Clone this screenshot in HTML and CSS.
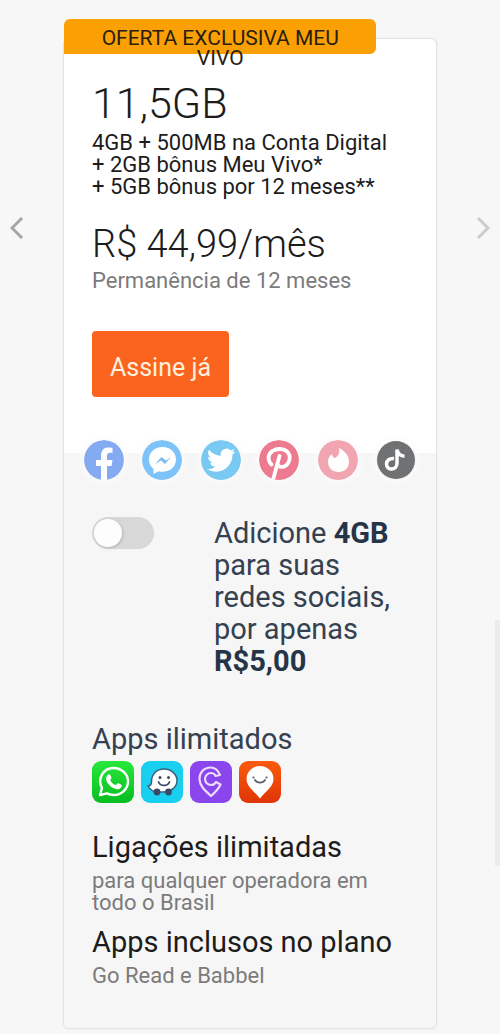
FILE: index.html
```html
<!DOCTYPE html>
<html lang="pt-BR">
<head>
<meta charset="utf-8">
<meta name="viewport" content="width=device-width, initial-scale=1">
<title>Oferta exclusiva Meu Vivo</title>
<link rel="stylesheet" href="styles.css">
</head>
<body>
<main class="carousel">
  <button class="arrow arrow-prev" type="button" aria-label="Anterior">
    <svg width="14" height="24" viewBox="0 0 14 24"><path d="M12 2 2 12l10 10"/></svg>
  </button>
  <article class="card">
    <p class="ribbon">OFERTA EXCLUSIVA MEU VIVO</p>
    <section class="offer">
      <h1 class="quota">11,5GB</h1>
      <p class="detail">4GB + 500MB na Conta Digital<br>+ 2GB bônus Meu Vivo*<br>+ 5GB bônus por 12 meses**</p>
      <p class="price">R$ 44,99/mês</p>
      <p class="note">Permanência de 12 meses</p>
      <button class="subscribe" type="button">Assine já</button>
    </section>
    <section class="extras">
      <div class="social">
        <svg viewBox="0 0 40 40" role="img" aria-label="Facebook"><circle cx="20" cy="20" r="20" fill="#84abf2"/><path fill="#fff" d="M17 40V26h-5v-6h5v-4c0-6 3-8.500 7.500-8.500 2 0 4 .3 4 .3v5H26c-2 0-3 1.200-3 3V20h5.500l-1 6H23v14z"/></svg>
        <svg viewBox="0 0 40 40" role="img" aria-label="Messenger"><circle cx="20" cy="20" r="20" fill="#7dc2f8"/><path fill="#fff" d="M20.500 7C12.500 7 7 12.500 7 19.500c0 4 1.600 7.200 4.500 9.500v5l5-2.700c1.300.4 2.600.5 4 .5C28.500 31.800 34 26.500 34 19.500S28.500 7 20.500 7z"/><path fill="#7dbdec" d="m13 24 6.500-7 4.500 3.500 5-3.500-6 7-4-3.500z"/></svg>
        <svg viewBox="0 0 40 40" role="img" aria-label="Twitter"><circle cx="20" cy="20" r="20" fill="#79c9f2"/><path fill="#fff" transform="translate(6 6) scale(1.180)" d="M23.950 4.570a10 10 0 0 1-2.820.77 4.960 4.960 0 0 0 2.160-2.720c-.95.55-2 .95-3.130 1.180a4.920 4.920 0 0 0-8.380 4.480C7.690 8.090 4.070 6.130 1.640 3.160a4.930 4.930 0 0 0 1.520 6.570 4.900 4.900 0 0 1-2.230-.61v.06c0 2.380 1.700 4.370 3.950 4.820a5 5 0 0 1-2.210.09 4.940 4.940 0 0 0 4.600 3.420A9.870 9.870 0 0 1 0 19.540a13.950 13.950 0 0 0 7.550 2.210c9.050 0 14-7.500 14-13.980 0-.21 0-.42-.02-.63a9.940 9.940 0 0 0 2.420-2.570z"/></svg>
        <svg viewBox="0 0 40 40" role="img" aria-label="Pinterest"><circle cx="20" cy="20" r="20" fill="#ed7b90"/><path d="M12.500 24.500C8.500 21 8.500 14 13.500 11c5-3.200 13-2.600 16 2.200 3 5-.2 13-6.200 13.600-2.500.3-4.300-1-4.700-2.600M20.500 16l-6 22" fill="none" stroke="#fff" stroke-width="3.800" stroke-linecap="round"/></svg>
        <svg viewBox="0 0 40 40" role="img" aria-label="Tinder"><circle cx="20" cy="20" r="20" fill="#f1a5b0"/><path fill="#fff" d="M21 8c6 3 10 8 10 13.500C31 28 26.500 32 20.500 32S10 28 10 22c0-4 1.600-6 4-8 .2 2 .8 3 2.500 4C20 17 22 13.500 21 8z"/></svg>
        <svg viewBox="0 0 40 40" role="img" aria-label="TikTok"><circle cx="20" cy="20" r="19" fill="#707173"/><path d="M18 18.500c-4.500-.5-7.500 2-7.500 5.500 0 3 2.300 5 5 5 3.200 0 5.500-2.200 5.500-5.500V9.500c.7 4 3 6.300 7.500 6.700" fill="none" stroke="#fff" stroke-width="3.500"/></svg>
      </div>
      <div class="addon">
        <input class="toggle" type="checkbox" role="switch" id="social-addon">
        <label class="addon-text" for="social-addon">Adicione <strong>4GB</strong> para suas redes sociais, por apenas <strong>R$5,00</strong></label>
      </div>
      <h2 class="title title-apps">Apps ilimitados</h2>
      <div class="apps">
        <svg viewBox="0 0 42 42" role="img" aria-label="WhatsApp"><defs><linearGradient id="green" x1="0" y1="0" x2="0" y2="1"><stop stop-color="#27e83c"/><stop offset="1" stop-color="#08bd20"/></linearGradient></defs><rect width="42" height="42" rx="9" fill="url(#green)"/><path d="m8 34 2-7C5 18 11 7 21.500 7 29.500 7 36 13 36 20.500S29.500 34 21.500 34c-2.500 0-4.500-.6-6.500-1.600z" fill="none" stroke="#fff" stroke-width="2.400" stroke-linejoin="round"/><path fill="#fff" d="M16.500 13.500c1.200-.5 2 .3 3 3.300.2 1-1.500 2-1.300 2.500 1.300 2.400 3 3.800 5.200 4.800.8.300 1.800-2 2.600-1.800 1 .2 3.500 1.400 3.700 2 .4 2-2 4.200-4.700 4-5-.5-10-5.500-11-10-.2-2 1-4.200 2.500-4.800z"/></svg>
        <svg viewBox="0 0 42 42" role="img" aria-label="Waze"><rect width="42" height="42" rx="9" fill="#18cfef"/><path d="M7 25c2 0 3.500-1.500 3.500-4.500C10.500 13 16 8 23 8s13 5 13 11.500-6 11.500-13.500 11.500H17C12.500 31 9 28.500 7 25z" fill="#fff" stroke="#3c607b" stroke-width="1.500"/><circle cx="16" cy="31" r="3.400" fill="#3c4865"/><circle cx="27.500" cy="31" r="3.400" fill="#3c4865"/><circle cx="19" cy="16.500" r="1.500" fill="#3c4865"/><circle cx="27.500" cy="16.500" r="1.500" fill="#3c4865"/><path d="M17.500 21c2 4.500 9 4.500 11 0" fill="none" stroke="#3c4865" stroke-width="1.800" stroke-linecap="round"/></svg>
        <svg viewBox="0 0 42 42" role="img" aria-label="Cabify"><rect width="42" height="42" rx="9" fill="#8b45ed"/><path d="M30 14C28 9 24.500 6.500 20.500 6.500 14 6.500 9.500 11.500 9.500 18c0 7 6 12 11.500 17 4-3.500 7.500-7 9.500-11.500L26 21c-1 2-2.500 3-5 3-3.300 0-6-2.700-6-6s2.700-6 6-6c2 0 3.700 1 4.700 3z" fill="none" stroke="#eadcff" stroke-width="2.200" stroke-linejoin="round"/></svg>
        <svg viewBox="0 0 42 42" role="img" aria-label="Vivo"><defs><linearGradient id="red" x1="0" y1="0" x2="0" y2="1"><stop stop-color="#fb5b0c"/><stop offset="1" stop-color="#df3508"/></linearGradient></defs><rect width="42" height="42" rx="9" fill="url(#red)"/><path fill="#fff" d="M21 37.500C15 30 7.500 25.500 7.500 18a13.500 13 0 0 1 27 0C34.500 25.500 27 30 21 37.500z"/><circle cx="14.500" cy="16.500" r="1.100" fill="#54606b"/><circle cx="27.500" cy="16.500" r="1.100" fill="#54606b"/><path d="M16 19c2 3.500 8 3.500 10 0" fill="none" stroke="#54606b" stroke-width="1.700" stroke-linecap="round"/></svg>
      </div>
      <h2 class="title">Ligações ilimitadas</h2>
      <p class="note feature-note">para qualquer operadora em todo o Brasil</p>
      <h2 class="title">Apps inclusos no plano</h2>
      <p class="note feature-note">Go Read e Babbel</p>
    </section>
  </article>
  <button class="arrow arrow-next" type="button" aria-label="Próximo">
    <svg width="14" height="24" viewBox="0 0 14 24"><path d="m2 2 10 10L2 22"/></svg>
  </button>
</main>
<aside class="side-tab"></aside>
</body>
</html>
```

FILE: styles.css
```css
* {
  box-sizing: border-box;
}

body {
  margin: 0;
  background: #f7f7f7;
  color: #1c1c1c;
  font-family: Roboto, "Liberation Sans", sans-serif;
}

h1, h2, p {
  margin: 0;
  font-weight: 400;
}

.carousel {
  display: grid;
  grid-template-columns: 63px minmax(0, 1fr) 63px;
  align-items: start;
  padding: 38px 0 6px;
}

.arrow {
  display: flex;
  margin-top: 178px;
  padding: 0 10px;
  border: 0;
  background: none;
}

.arrow path {
  fill: none;
  stroke: #a6a6a6;
  stroke-width: 3;
}

.arrow-next {
  justify-content: flex-end;
}

.arrow-next path {
  stroke: #cccccc;
}

.card {
  position: relative;
  border: 1px solid #e2e2e2;
  border-radius: 6px;
  background: #f6f6f6;
  box-shadow: 0 0 2px #e8e8e8;
}

.ribbon {
  position: absolute;
  top: -20px;
  left: 0;
  width: 84%;
  height: 35px;
  padding: 9px 32px 0;
  border-radius: 6px 6px 6px 0;
  background: #faa005;
  color: #29200f;
  font-size: 21px;
  line-height: 20px;
  text-align: center;
}

.offer {
  padding: 42px 28px 56px;
  border-radius: 6px 6px 0 0;
  background: #ffffff;
}

.quota {
  font-size: 43px;
  font-weight: 300;
  line-height: 44px;
}

.detail {
  margin-top: 7px;
  font-size: 22px;
  line-height: 22px;
}

.price {
  margin-top: 24px;
  font-size: 38px;
  font-weight: 300;
  line-height: 44px;
}

.note {
  margin-top: 4px;
  color: #7b7b7b;
  font-size: 22px;
  line-height: 22px;
}

.subscribe {
  margin-top: 39px;
  padding: 23px 18px 15px;
  border: 0;
  border-radius: 4px;
  background: #fb641e;
  color: #fff0df;
  font-family: inherit;
  font-size: 25px;
  line-height: 28px;
}

.extras {
  padding: 0 28px 41px;
}

.social {
  display: flex;
  justify-content: space-between;
  margin: -13px -8px 0;
}

.social svg {
  width: 40px;
  height: 40px;
  border-radius: 50%;
  box-shadow: 0 0 6px 3px #fbfbfb;
}

.addon {
  display: grid;
  grid-template-columns: 62px 1fr;
  gap: 60px;
  align-items: start;
  margin-top: 37px;
}

.toggle {
  display: flex;
  width: 62px;
  height: 32px;
  margin: 0;
  padding: 2px;
  border-radius: 16px;
  background: #d8d8d8;
  appearance: none;
}

.toggle::before {
  width: 28px;
  height: 28px;
  border-radius: 50%;
  background: #fdfdfd;
  box-shadow: 1px 1px 3px #b5b5b5;
  content: "";
}

.toggle:checked {
  justify-content: flex-end;
  background: #fb641e;
}

.addon-text {
  color: #344150;
  font-size: 29px;
  line-height: 32px;
}

.addon-text strong {
  color: #263448;
}

.title {
  margin-top: 12px;
  font-size: 29px;
  line-height: 32px;
}

.title-apps {
  margin-top: 46px;
  color: #344150;
}

.feature-note {
  margin-top: 7px;
}

.apps {
  display: flex;
  gap: 7px;
  margin: 6px 0 28px;
}

.apps svg {
  width: 42px;
  height: 42px;
}

.side-tab {
  position: fixed;
  top: 60%;
  right: 0;
  width: 5px;
  height: 246px;
  background: #ececec;
}
```
